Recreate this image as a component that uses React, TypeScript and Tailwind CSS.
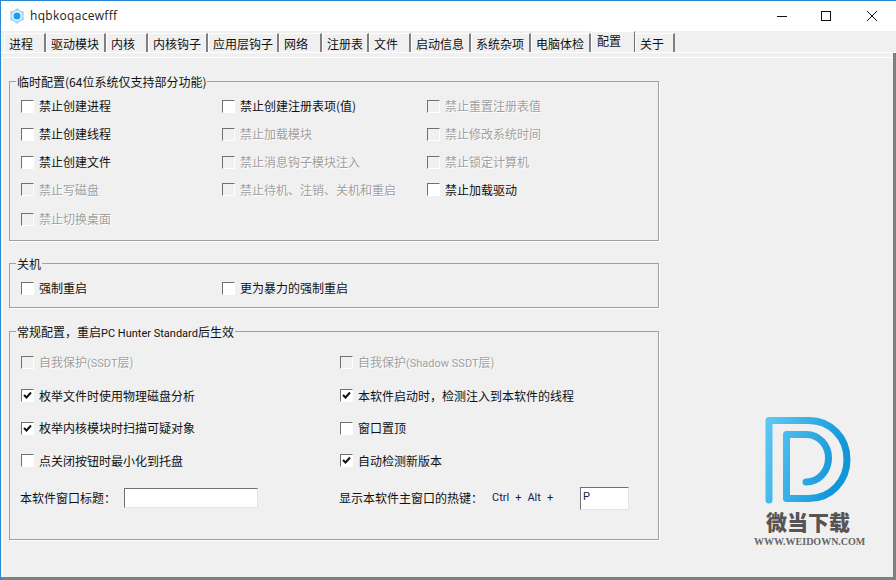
import React from 'react';

const FONT = '"Noto Sans CJK SC", "Open Sans", sans-serif';

const tabs = [
  { label: '进程', width: 'w-[42px]' },
  { label: '驱动模块', width: 'w-[60px]' },
  { label: '内核', width: 'w-[42px]' },
  { label: '内核钩子', width: 'w-[60px]' },
  { label: '应用层钩子', width: 'w-[71px]' },
  { label: '网络', width: 'w-[43px]' },
  { label: '注册表', width: 'w-[47px]' },
  { label: '文件', width: 'w-[42px]' },
  { label: '启动信息', width: 'w-[60px]' },
  { label: '系统杂项', width: 'w-[60px]' },
  { label: '电脑体检', width: 'w-[60px]' },
  { label: '配置', width: 'w-[44px]', active: true },
  { label: '关于', width: 'w-[40px]' },
];

// latin runs in the original are set smaller and narrower than the CJK text
function Latin({ children }: { children: React.ReactNode }) {
  return <span className="font-['Roboto',sans-serif] text-[11px]">{children}</span>;
}

function Check({ label, checked = false, disabled = false }: { label: React.ReactNode; checked?: boolean; disabled?: boolean }) {
  return (
    <div className="flex items-center h-full">
      <span
        className={`w-[13px] h-[13px] shrink-0 border border-t-[#707070] border-l-[#707070] border-r-white border-b-white flex items-center justify-center ${
          disabled ? 'bg-[#f0f0f0]' : 'bg-white'
        }`}
      >
        {checked && (
          <svg width="9" height="9" viewBox="0 0 9 9">
            <path d="M1 4l2.5 2.500L8 1.500" fill="none" stroke="#111" strokeWidth="2" />
          </svg>
        )}
      </span>
      <span
        className={`ml-[5px] text-xs whitespace-nowrap ${
          disabled ? 'text-[#a0a0a0] [text-shadow:1px_1px_0_#fff]' : 'text-[#111]'
        }`}
      >
        {label}
      </span>
    </div>
  );
}

function Group({ title, className, children }: { title: React.ReactNode; className: string; children: React.ReactNode }) {
  return (
    <div className={`relative w-[650px] border border-[#a0a0a0] shadow-[1px_1px_0_#fff] ${className}`}>
      <span className="absolute -top-[9px] left-[6px] px-px bg-[#f0f0f0] text-xs leading-[18px] text-[#111] whitespace-nowrap">
        {title}
      </span>
      {children}
    </div>
  );
}

function Logo() {
  return (
    <div className="absolute left-[740px] top-[400px] w-[153px] h-[177px]">
      <svg width="153" height="108" viewBox="0 0 153 108" className="block">
        <defs>
          <linearGradient id="dlogo" x1="0" y1="0" x2="1" y2="0.3">
            <stop offset="0" stopColor="#5cc6f3" />
            <stop offset="1" stopColor="#1296d8" />
          </linearGradient>
        </defs>
        <path
          d="M28 99V19.500H68C89.500 19.500 106 36.500 106 58.500C106 80.500 89.500 97.500 68 97.500H45.500V33.500H65C78 33.500 87.500 44 87.500 57C87.500 70 78 81 65 81"
          fill="none"
          stroke="url(#dlogo)"
          strokeWidth="7"
          strokeLinecap="round"
          strokeLinejoin="round"
        />
      </svg>
      <div className="-mt-[1px] pl-[25px] text-[21px] leading-[26px] font-black text-[#555] whitespace-nowrap">
        微当下载
      </div>
      <div className="mt-[2px] pl-[13px] font-['Liberation_Serif',serif] text-[10px] leading-[12px] font-bold text-[#666] whitespace-nowrap">
        WWW.WEIDOWN.COM
      </div>
    </div>
  );
}

export default function App() {
  return (
    <div
      className="relative w-[896px] h-[580px] overflow-hidden bg-[#f0f0f0] border-t border-l border-[#2b87d3] flex flex-col"
      style={{ fontFamily: FONT }}
    >
      {/* title bar */}
      <div className="h-[30px] shrink-0 bg-white flex items-center">
        <svg width="16" height="16" viewBox="0 0 16 16" className="ml-[8px]">
          <path d="M8 0l3 2.500 4 1-.5 4.500.5 4-4 1.500-3 2.500-3-2.500-4-1.500.5-4-.5-4.500 4-1z" fill="#a9d6f7" />
          <circle cx="8" cy="8" r="5" fill="#eef7fe" />
          <circle cx="8" cy="8" r="3.500" fill="#18a0f8" />
        </svg>
        <span className="ml-[5px] font-['Open_Sans',sans-serif] text-xs text-[#222] tracking-[0.3px]">hqbkoqacewfff</span>
        <div className="ml-auto flex items-center h-full text-[#111]">
          <svg width="10" height="10" viewBox="0 0 10 10" className="mr-[34px]">
            <path d="M0 5.500h10" stroke="#111" />
          </svg>
          <svg width="10" height="10" viewBox="0 0 10 10" className="mr-[36px]">
            <rect x="0.500" y="0.500" width="9" height="9" fill="none" stroke="#111" />
          </svg>
          <svg width="10" height="10" viewBox="0 0 10 10" className="mr-[19px]">
            <path d="M0 0l10 10M10 0L0 10" stroke="#111" />
          </svg>
        </div>
      </div>

      {/* tabs */}
      <div className="h-[22px] shrink-0 flex items-end pl-[3px] border-b border-white">
        {tabs.map((t) => (
          <div
            key={t.label}
            className={`${t.width} flex items-center text-xs text-[#111] border-t border-l border-white ${
              t.active
                ? 'h-[21px] pl-[5px] pb-[2px] border-r border-r-[#707070]'
                : 'h-[19px] pl-[4px] pt-[2px] border-r-2 border-r-[#808080]'
            }`}
          >
            {t.label}
          </div>
        ))}
      </div>

      {/* tab page */}
      <div className="flex-1 border-r-[3px] border-b-[3px] border-[#7f7f7f] pl-[1px] pt-[4px]">
        <div className="h-full border-t border-l border-white pl-[6px] pt-[23px]">
          <Group title="临时配置(64位系统仅支持部分功能)" className="h-[160px]">
            <div className="grid grid-cols-[201px_205px_1fr] grid-rows-[28px_28px_28px_27px_32px] pl-[11px] pt-[10px]">
              <Check label="禁止创建进程" />
              <Check label="禁止创建注册表项(值)" />
              <Check label="禁止重置注册表值" disabled />
              <Check label="禁止创建线程" />
              <Check label="禁止加载模块" disabled />
              <Check label="禁止修改系统时间" disabled />
              <Check label="禁止创建文件" />
              <Check label="禁止消息钩子模块注入" disabled />
              <Check label="禁止锁定计算机" disabled />
              <Check label="禁止写磁盘" disabled />
              <Check label="禁止待机、注销、关机和重启" disabled />
              <Check label="禁止加载驱动" />
              <Check label="禁止切换桌面" disabled />
            </div>
          </Group>

          <Group title="关机" className="h-[45px] mt-[22px]">
            <div className="grid grid-cols-[201px_1fr] h-[24px] pl-[11px] mt-[12px]">
              <Check label="强制重启" />
              <Check label="更为暴力的强制重启" />
            </div>
          </Group>

          <Group
            title={
              <>
                常规配置，重启<Latin>PC Hunter Standard</Latin>后生效
              </>
            }
            className="h-[209px] mt-[23px]"
          >
            <div className="grid grid-cols-[319px_1fr] grid-rows-[33px_33px_32px_33px] pl-[11px] pt-[14px]">
              <Check
                label={
                  <>
                    自我保护<Latin>(SSDT</Latin>层)
                  </>
                }
                disabled
              />
              <Check
                label={
                  <>
                    自我保护<Latin>(Shadow SSDT</Latin>层)
                  </>
                }
                disabled
              />
              <Check label="枚举文件时使用物理磁盘分析" checked />
              <Check label="本软件启动时，检测注入到本软件的线程" checked />
              <Check label="枚举内核模块时扫描可疑对象" checked />
              <Check label="窗口置顶" />
              <Check label="点关闭按钮时最小化到托盘" />
              <Check label="自动检测新版本" checked />
            </div>
            <div className="grid grid-cols-[319px_1fr] pl-[10px] mt-[9px] h-[24px] items-center text-xs text-[#111]">
              <div className="flex items-center">
                <span className="w-[104px] whitespace-nowrap">本软件窗口标题：</span>
                <span className="w-[134px] h-[20px] bg-white border border-t-[#707070] border-l-[#707070] border-r-[#e4e4e4] border-b-[#e4e4e4]" />
              </div>
              <div className="flex items-center">
                <span className="w-[153px] whitespace-nowrap">显示本软件主窗口的热键：</span>
                <span className="w-[88px] flex gap-[6px] font-['Roboto',sans-serif] text-[11px] text-[#1a1a50]">
                  <span>Ctrl</span>
                  <span>+</span>
                  <span>Alt</span>
                  <span>+</span>
                </span>
                <span className="w-[49px] h-[23px] bg-white border border-t-[#707070] border-l-[#707070] border-r-[#e4e4e4] border-b-[#e4e4e4] pl-[2px] font-['Roboto',sans-serif] text-[11px] leading-[18px] text-[#1a1a50]">
                  P
                </span>
              </div>
            </div>
          </Group>
        </div>
      </div>

      <Logo />
    </div>
  );
}
